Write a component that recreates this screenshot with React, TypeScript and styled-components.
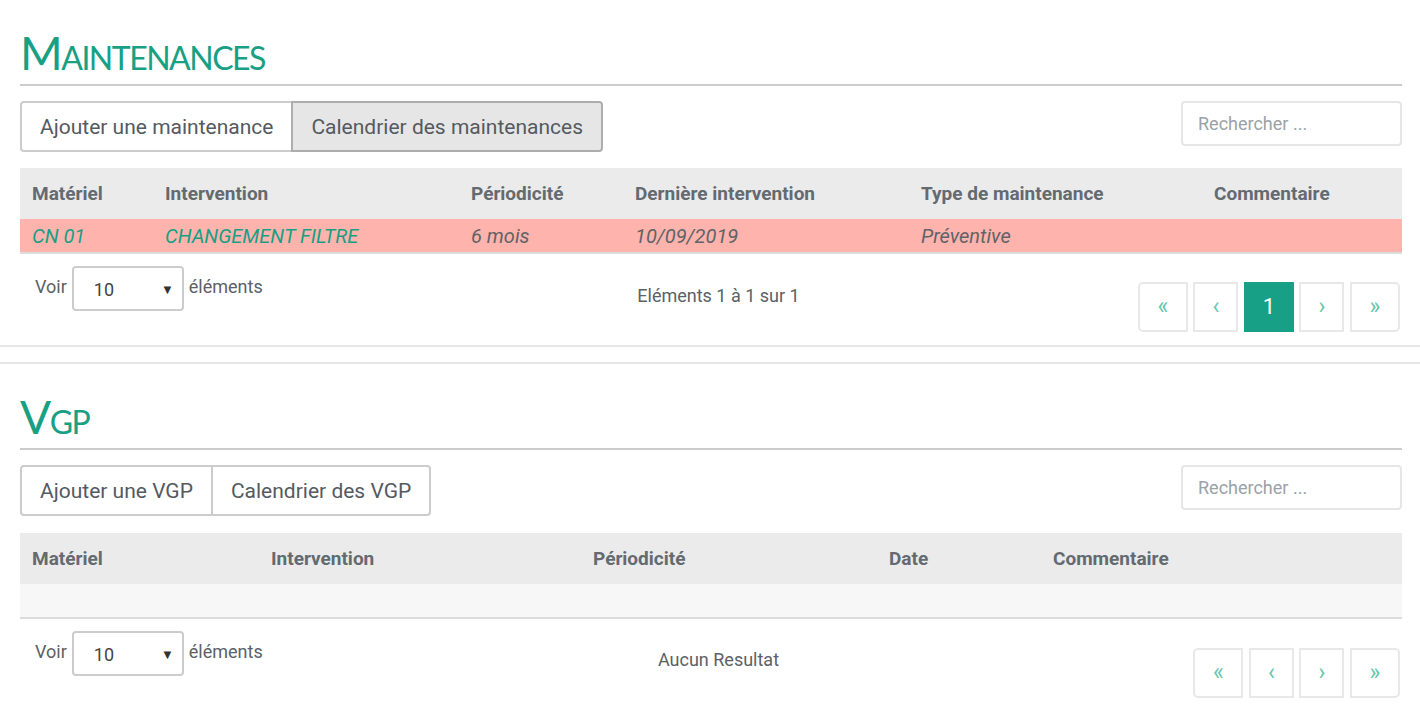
import styled, { createGlobalStyle } from 'styled-components'

const GlobalStyle = createGlobalStyle`
  body {
    margin: 0;
    background: #ffffff;
    font-family: Roboto, 'Liberation Sans', sans-serif;
    color: #5b6166;
  }
`

const Panel = styled.section<{ $first?: boolean }>`
  padding: 28px 18px 0 20px;
  box-sizing: border-box;
  ${({ $first }) =>
    $first
      ? 'border-bottom: 2px solid #e6e6e6; margin-bottom: 15px; height: 347px;'
      : 'border-top: 2px solid #e6e6e6;'}
`

const Title = styled.h1`
  margin: 0;
  font-family: Lato, 'Open Sans', sans-serif;
  font-weight: 400;
  font-size: 46px;
  line-height: 50px;
  color: #18a084;
  font-variant: small-caps;
  letter-spacing: -1.5px;
  padding-bottom: 6px;
  border-bottom: 2px solid #cccccc;
`

const Toolbar = styled.div`
  display: flex;
  justify-content: space-between;
  align-items: flex-start;
  margin-top: 15px;
`

const ButtonGroup = styled.div`
  display: flex;
`

const GroupButton = styled.button<{ $active?: boolean }>`
  height: 51px;
  padding: 0 18px;
  font-family: Roboto, 'Liberation Sans', sans-serif;
  font-size: 21px;
  color: #545a60;
  background: ${({ $active }) => ($active ? '#e6e6e6' : '#ffffff')};
  border: 2px solid ${({ $active }) => ($active ? '#adadad' : '#cccccc')};
  margin-left: -2px;
  &:first-child {
    margin-left: 0;
    border-radius: 4px 0 0 4px;
  }
  &:last-child {
    border-radius: 0 4px 4px 0;
  }
`

const Search = styled.input`
  width: 221px;
  height: 45px;
  box-sizing: border-box;
  border: 2px solid #e6e6e6;
  border-radius: 4px;
  padding: 0 15px;
  font-family: Roboto, 'Liberation Sans', sans-serif;
  font-size: 18px;
  &::placeholder {
    color: #9aa2a8;
  }
`

const Table = styled.table<{ $offset: number }>`
  width: 100%;
  margin-top: ${({ $offset }) => $offset}px;
  border-collapse: collapse;
  table-layout: fixed;
`

const Col = styled.col<{ $w: number }>`
  width: ${({ $w }) => $w}px;
`

const HeadCell = styled.th`
  height: 51px;
  padding: 0 12px;
  background: #ebebeb;
  text-align: left;
  font-size: 19px;
  font-weight: 700;
  color: #636a70;
`

const Row = styled.tr<{ $empty?: boolean }>`
  background: ${({ $empty }) => ($empty ? '#f7f7f7' : '#ffb3ad')};
  border-bottom: 2px solid #dcdcdc;
`

const Cell = styled.td<{ $accent?: boolean }>`
  height: 33px;
  padding: 0 12px;
  font-size: 20px;
  font-style: italic;
  color: ${({ $accent }) => ($accent ? '#17a085' : '#5f6468')};
`

const Footer = styled.div`
  display: grid;
  grid-template-columns: 1fr 1fr 1fr;
  align-items: start;
  padding: 12px 0 0 15px;
`

const Length = styled.div`
  display: flex;
  align-items: flex-start;
  gap: 5px;
  font-size: 18px;
  color: #5b6166;
`

const LengthLabel = styled.span`
  padding-top: 10px;
`

const Select = styled.div`
  width: 112px;
  height: 45px;
  box-sizing: border-box;
  border: 2px solid #cccccc;
  border-radius: 4px;
  display: flex;
  align-items: center;
  justify-content: space-between;
  padding: 2px 8px 0 20px;
  font-size: 18px;
  color: #444;
`

const Caret = styled.span`
  font-size: 13px;
  color: #333;
`

const Info = styled.div<{ $offset: number }>`
  text-align: center;
  font-size: 18px;
  color: #5b6166;
  margin-top: ${({ $offset }) => $offset}px;
`

const Pager = styled.div<{ $offset: number }>`
  display: flex;
  justify-content: flex-end;
  gap: 5.5px;
  margin-top: ${({ $offset }) => $offset}px;
  padding-right: 2px;
`

const PageButton = styled.button<{ $active?: boolean; $w: number }>`
  width: ${({ $w }) => $w}px;
  height: 50px;
  box-sizing: border-box;
  border: 2px solid ${({ $active }) => ($active ? '#17a085' : '#e8e8e8')};
  background: ${({ $active }) => ($active ? '#17a085' : '#ffffff')};
  color: ${({ $active }) => ($active ? '#ffffff' : '#66c6ab')};
  font-family: Roboto, 'Liberation Sans', sans-serif;
  font-size: ${({ $active }) => ($active ? '22px' : '23px')};
  line-height: 1;
  display: flex;
  align-items: center;
  justify-content: center;
  padding: 0 0 ${({ $active }) => ($active ? '0' : '2px')};
  &:first-child {
    border-radius: 5px 0 0 5px;
  }
  &:last-child {
    border-radius: 0 5px 5px 0;
  }
`

type Section = {
  title: string
  addLabel: string
  calLabel: string
  calActive: boolean
  tableOffset: number
  columns: { label: string; w: number }[]
  row?: { text: string; accent?: boolean }[]
  info: string
  infoOffset: number
  pagerOffset: number
  pages: boolean
}

const sections: Section[] = [
  {
    title: 'Maintenances',
    addLabel: 'Ajouter une maintenance',
    calLabel: 'Calendrier des maintenances',
    calActive: true,
    tableOffset: 16,
    columns: [
      { label: 'Matériel', w: 133 },
      { label: 'Intervention', w: 306 },
      { label: 'Périodicité', w: 164 },
      { label: 'Dernière intervention', w: 286 },
      { label: 'Type de maintenance', w: 293 },
      { label: 'Commentaire', w: 200 },
    ],
    row: [
      { text: 'CN 01', accent: true },
      { text: 'CHANGEMENT FILTRE', accent: true },
      { text: '6 mois' },
      { text: '10/09/2019' },
      { text: 'Préventive' },
      { text: '' },
    ],
    info: 'Eléments 1 à 1 sur 1',
    infoOffset: 19,
    pagerOffset: 16,
    pages: true,
  },
  {
    title: 'Vgp',
    addLabel: 'Ajouter une VGP',
    calLabel: 'Calendrier des VGP',
    calActive: false,
    tableOffset: 17,
    columns: [
      { label: 'Matériel', w: 239 },
      { label: 'Intervention', w: 322 },
      { label: 'Périodicité', w: 296 },
      { label: 'Date', w: 164 },
      { label: 'Commentaire', w: 361 },
    ],
    info: 'Aucun Resultat',
    infoOffset: 18,
    pagerOffset: 17,
    pages: false,
  },
]

const PaneBlock = ({ s, first }: { s: Section; first?: boolean }) => (
  <Panel $first={first}>
    <Title>{s.title}</Title>
    <Toolbar>
      <ButtonGroup>
        <GroupButton>{s.addLabel}</GroupButton>
        <GroupButton $active={s.calActive}>{s.calLabel}</GroupButton>
      </ButtonGroup>
      <Search placeholder='Rechercher ...' />
    </Toolbar>
    <Table $offset={s.tableOffset}>
      <colgroup>
        {s.columns.map((c) => (
          <Col key={c.label} $w={c.w} />
        ))}
      </colgroup>
      <thead>
        <tr>
          {s.columns.map((c) => (
            <HeadCell key={c.label}>{c.label}</HeadCell>
          ))}
        </tr>
      </thead>
      <tbody>
        {s.row ? (
          <Row>
            {s.row.map((c, i) => (
              <Cell key={i} $accent={c.accent}>
                {c.text}
              </Cell>
            ))}
          </Row>
        ) : (
          <Row $empty>
            <Cell colSpan={s.columns.length} />
          </Row>
        )}
      </tbody>
    </Table>
    <Footer>
      <Length>
        <LengthLabel>Voir</LengthLabel>
        <Select>
          10 <Caret>▼</Caret>
        </Select>
        <LengthLabel>éléments</LengthLabel>
      </Length>
      <Info $offset={s.infoOffset}>{s.info}</Info>
      <Pager $offset={s.pagerOffset}>
        <PageButton $w={50}>«</PageButton>
        <PageButton $w={45}>‹</PageButton>
        {s.pages && (
          <PageButton $w={50} $active>
            1
          </PageButton>
        )}
        <PageButton $w={45}>›</PageButton>
        <PageButton $w={50}>»</PageButton>
      </Pager>
    </Footer>
  </Panel>
)

const App = () => (
  <>
    <GlobalStyle />
    <PaneBlock s={sections[0]} first />
    <PaneBlock s={sections[1]} />
  </>
)

export default App
